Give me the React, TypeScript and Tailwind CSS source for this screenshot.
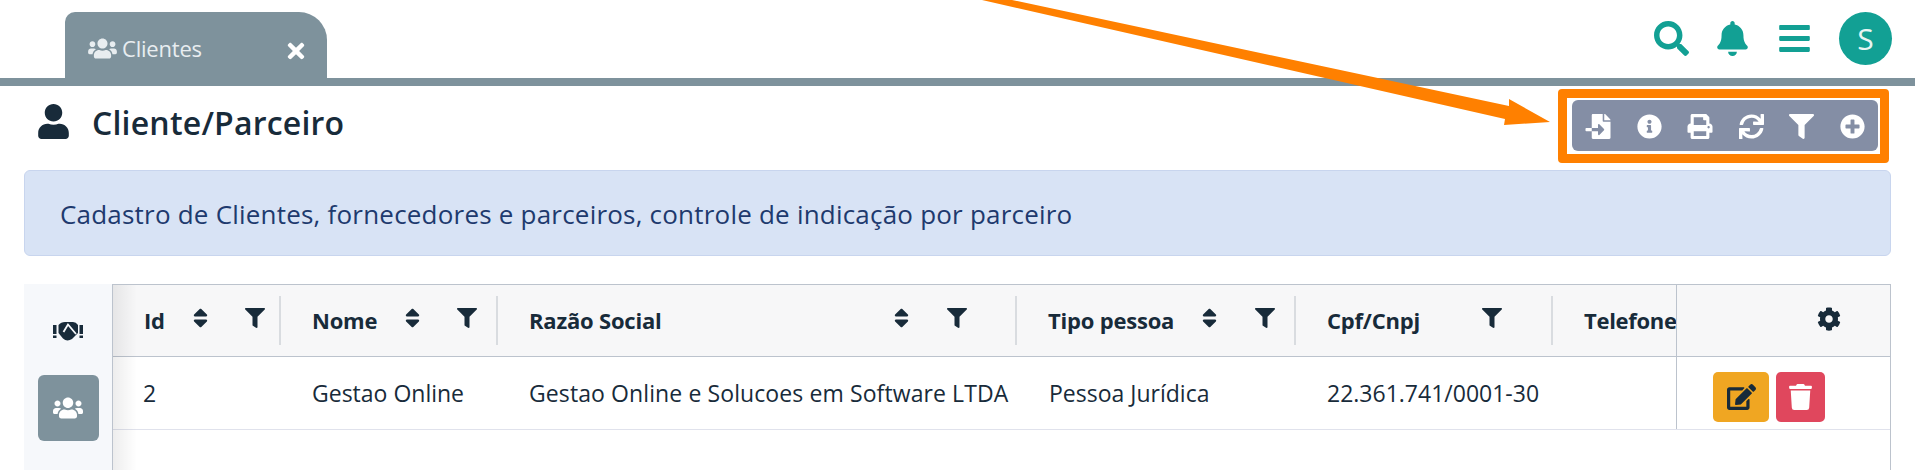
import React from "react";
import { FaUsers, FaTimes, FaUser, FaSearch, FaBell, FaBars, FaFileImport, FaInfoCircle, FaPrint, FaSync, FaFilter, FaPlusCircle, FaSort, FaCog, FaEdit, FaTrash } from "react-icons/fa";

function Head({ outer, label, labelW, sortW, filter = true }: { outer: string; label: string; labelW: string; sortW?: string; filter?: boolean }) {
  return (
    <div className={`${outer} h-full flex items-center shrink-0`}>
      <div className="w-full h-[49px] border-r-2 border-[#d9dce0] flex items-center pl-[31px]">
        <span className={`${labelW} font-bold whitespace-nowrap tracking-[-0.2px]`}>{label}</span>
        {sortW && (
          <span className={`${sortW} flex mb-[6px]`}>
            <FaSort className="w-[15px] h-[24px]" />
          </span>
        )}
        {filter && <FaFilter className="w-[20px] h-[20px] mb-[6px]" />}
      </div>
    </div>
  );
}

function Handshake() {
  return (
    <svg viewBox="0 0 30 19" className="w-[30px] h-[19px]">
      <rect x="0" y="3" width="3.5" height="9" fill="currentColor" />
      <rect x="0" y="13.5" width="3.5" height="2.5" fill="currentColor" />
      <rect x="26.5" y="3" width="3.5" height="9" fill="currentColor" />
      <rect x="26.5" y="13.5" width="3.5" height="2.5" fill="currentColor" />
      <path d="M5.5 3 Q8 0 12 0 L20 0 Q23 0 25 3 V11 L19 17 Q14 20 10 16.5 L5.5 11 Z" fill="currentColor" />
      <path d="M10.5 10 L15 2.5 L23 12" fill="none" stroke="#f6f8fb" strokeWidth="1.8" />
    </svg>
  );
}

export default function App() {
  return (
    <div className="relative w-[1915px] h-[470px] overflow-hidden bg-white text-[#182b3a] [font-family:'Open_Sans',sans-serif]">
      <div className="h-[78px] flex justify-between">
        <div className="ml-[65px] mt-[12px] w-[262px] h-[66px] bg-[#7e929c] rounded-tl-[10px] rounded-tr-[28px] flex text-[#e8edf0]">
          <FaUsers className="ml-[23px] mt-[25px] w-[29px] h-[23px]" />
          <span className="ml-[5px] mt-[20px] text-[22px] leading-[32px] h-[32px] w-[84px] whitespace-nowrap tracking-[-0.2px]">Clientes</span>
          <FaTimes className="ml-[78px] mt-[27px] w-[24px] h-[24px] text-white" />
        </div>
        <div className="flex items-start text-[#12a094] mr-[23px]">
          <FaSearch className="mt-[21px] w-[35px] h-[35px]" />
          <FaBell className="ml-[28px] mt-[21px] w-[31px] h-[35px]" />
          <FaBars className="ml-[31px] mt-[21px] w-[31px] h-[35px]" />
          <div className="ml-[29px] mt-[12px] w-[53px] h-[53px] rounded-full bg-[#12a094] text-[#e8f5f3] text-[30px] flex items-center justify-center">S</div>
        </div>
      </div>
      <div className="h-[8px] bg-[#7e929c]" />

      <div className="h-[84px] flex justify-between">
        <div className="flex">
          <FaUser className="ml-[38px] mt-[18px] w-[31px] h-[35px]" />
          <h1 className="ml-[23px] mt-[14px] text-[32px] leading-[46px] h-[46px] font-semibold tracking-[0.2px]">Cliente/Parceiro</h1>
        </div>
        <div className="mt-[3px] mr-[26px] w-[331px] h-[74px] border-[9px] border-[#ff8000] rounded-[4px] pl-[5px] pt-[2px]">
          <div className="w-[306px] h-[51px] pt-[2px] bg-[#848ea5] rounded-[6px] flex items-center justify-between px-[13px] text-white">
            <FaFileImport className="w-[26px] h-[25px]" />
            <FaInfoCircle className="w-[25px] h-[25px]" />
            <FaPrint className="w-[26px] h-[25px]" />
            <FaSync className="w-[25px] h-[25px]" />
            <FaFilter className="w-[25px] h-[25px]" />
            <FaPlusCircle className="w-[25px] h-[25px]" />
          </div>
        </div>
      </div>

      <div className="ml-[24px] w-[1867px] h-[86px] pt-[2px] bg-[#d8e3f5] border border-[#c8d5ee] rounded-[6px] flex items-center pl-[35px] text-[26px] tracking-[0.21px] text-[#1e3a6e]">
        Cadastro de Clientes, fornecedores e parceiros, controle de indicação por parceiro
      </div>

      <div className="mt-[28px] ml-[24px] w-[1867px] h-[186px] flex">
        <div className="w-[88px] bg-[#f6f8fb] flex flex-col items-center shrink-0">
          <div className="mt-[38px] h-[19px] w-[30px]">
            <Handshake />
          </div>
          <div className="mt-[34px] w-[61px] h-[66px] rounded-[6px] bg-[#7e929c] text-white flex items-center justify-center">
            <FaUsers className="w-[30px] h-[24px]" />
          </div>
        </div>
        <div className="relative flex-1 border border-[#bcc3cd] border-b-0 text-[22px]">
          <div className="h-[72px] bg-[#f7f7f8] border-b border-[#bcc3cd] flex">
            <Head outer="w-[168px]" label="Id" labelW="w-[49px]" sortW="w-[52px]" />
            <Head outer="w-[217px]" label="Nome" labelW="w-[93px]" sortW="w-[52px]" />
            <Head outer="w-[519px]" label="Razão Social" labelW="w-[365px]" sortW="w-[53px]" />
            <Head outer="w-[279px]" label="Tipo pessoa" labelW="w-[154px]" sortW="w-[53px]" />
            <Head outer="w-[257px]" label="Cpf/Cnpj" labelW="w-[155px]" />
            <div className="w-[123px] overflow-hidden h-full flex items-center pl-[31px] font-bold shrink-0 tracking-[-0.3px]">Telefone</div>
            <div className="flex-1 border-l border-[#bcc3cd] flex justify-end items-start pt-[22px] pr-[49px]">
              <FaCog className="w-[24px] h-[24px]" />
            </div>
          </div>
          <div className="h-[73px] border-b border-[#e0e2ec] flex items-center text-[23px]">
            <div className="w-[168px] pl-[30px] shrink-0">2</div>
            <div className="w-[217px] pl-[31px] shrink-0">Gestao Online</div>
            <div className="w-[519px] pl-[31px] shrink-0 whitespace-nowrap tracking-[0.1px]">Gestao Online e Solucoes em Software LTDA</div>
            <div className="w-[279px] pl-[32px] shrink-0">Pessoa Jurídica</div>
            <div className="w-[257px] pl-[31px] shrink-0">22.361.741/0001-30</div>
            <div className="w-[123px] shrink-0" />
            <div className="flex-1 h-full border-l border-[#bcc3cd] flex items-start pt-[15px] pl-[36px] gap-[7px]">
              <button className="w-[56px] h-[50px] rounded-[5px] bg-[#f0a622] flex items-center justify-center">
                <FaEdit className="w-[29px] h-[26px]" />
              </button>
              <button className="w-[49px] h-[50px] rounded-[5px] bg-[#e0475d] flex items-center justify-center">
                <FaTrash className="w-[23px] h-[26px] text-white" />
              </button>
            </div>
          </div>
          <div className="absolute left-0 top-0 bottom-0 w-[24px] bg-gradient-to-r from-[#00000012] to-transparent pointer-events-none" />
        </div>
      </div>

      <svg className="absolute left-0 top-0 pointer-events-none" width="1915" height="470">
        <polygon points="982,0 1012,0 1509,106 1509,99 1550,122 1504,125 1505,119" fill="#ff8000" />
      </svg>
    </div>
  );
}
